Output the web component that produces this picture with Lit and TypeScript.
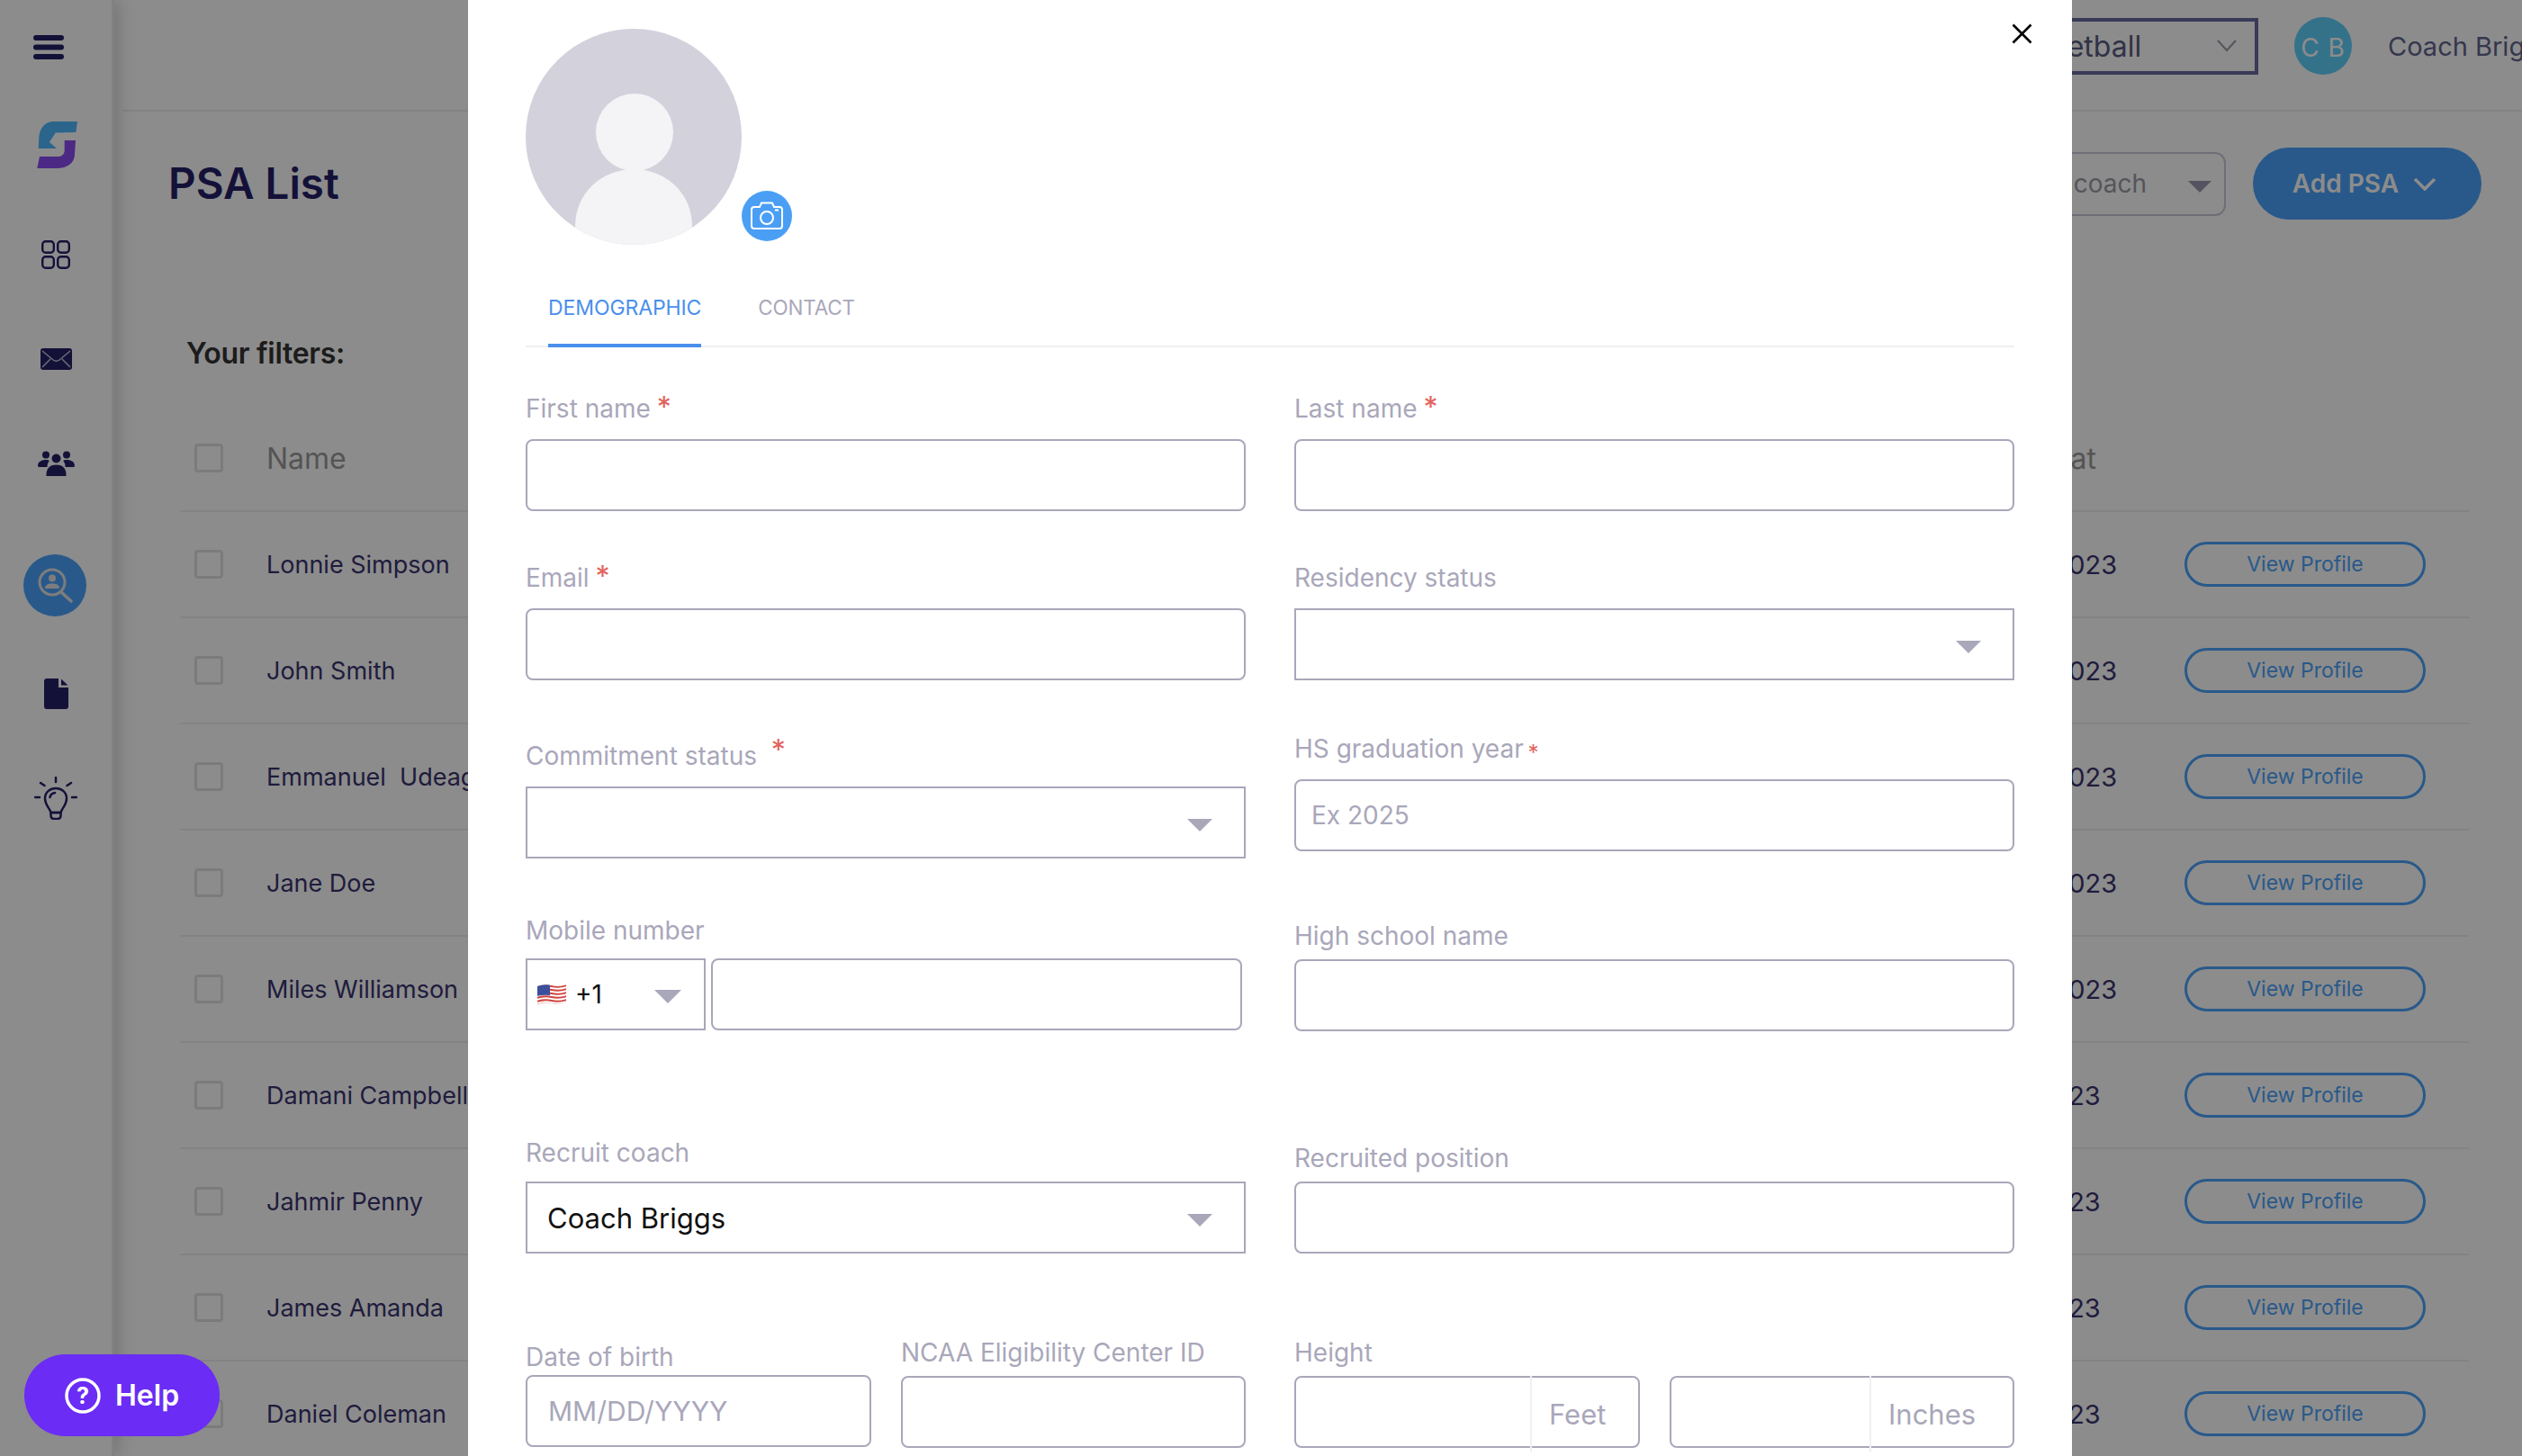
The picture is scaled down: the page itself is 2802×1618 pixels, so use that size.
import { LitElement, html, css, svg } from "lit";
import { customElement } from "lit/decorators.js";

const caret = html`<svg class="caret" viewBox="0 0 28 14"><path d="M0 0H28L14 14Z" fill="currentColor"/></svg>`;

const rows: [string, string][] = [
  ["Lonnie Simpson", "10/12/2023"],
  ["John Smith", "10/12/2023"],
  ["Emmanuel  Udeagha", "10/12/2023"],
  ["Jane Doe", "10/12/2023"],
  ["Miles Williamson", "10/12/2023"],
  ["Damani Campbell", "1/12/2023"],
  ["Jahmir Penny", "1/12/2023"],
  ["James Amanda", "1/12/2023"],
  ["Daniel Coleman", "1/12/2023"],
];

@customElement("app-root")
export class AppRoot extends LitElement {
  static styles = css`
    :host { display: block; position: relative; width: 2802px; height: 1618px; overflow: hidden; background: #fff;
      font-family: Inter, "Noto Sans", sans-serif; color: #262069; }
    * { box-sizing: border-box; }
    .page { display: flex; width: 100%; height: 100%; }
    .side { width: 127px; flex: none; border-right: 3px solid #ececec; box-shadow: 4px 0 18px rgba(0,0,0,.18); position: relative;
      display: grid; grid-template-rows: 104px 114px 130px 102px 130px 140px 102px 130px; justify-items: center; align-items: center; align-content: start; color: #262069; }
    .side svg { display: block; }
    .side .burger { margin-right: 16px; }
    .side .logo { margin-left: 3px; }
    .active { width: 70px; height: 69px; border-radius: 50%; background: #4ca3fb; display: flex; align-items: center; justify-content: center; margin-right: 3px; }
    .main { flex: 1; min-width: 0; overflow: hidden; }
    .top { height: 124px; margin-left: 9px; border-bottom: 2px solid #efefef; display: flex; align-items: center; padding: 0 0 20px 2064px; white-space: nowrap; }
    .sport { flex: none; width: 309px; height: 63px; border: 4px solid #686b9f; display: flex; align-items: center; justify-content: space-between; padding: 0 20px 0 20px; font-size: 32px; color: #5a5c80; }
    .sport svg { width: 22px; height: 14px; }
    .cb { flex: none; width: 64px; height: 64px; border-radius: 50%; margin-left: 40px; background: #5fcffb; color: #fff; display: flex; align-items: center; justify-content: center; font-size: 28px; letter-spacing: 1px; padding-top: 3px; }
    .coach { flex: none; margin-left: 40px; font-size: 29px; color: #62648e; }
    .head { display: flex; align-items: center; height: 160px; padding: 0 45px 0 60px; }
    .title { font-size: 47.5px; font-weight: 600; margin: 0 auto 2px 0; color: #262069; }
    .coachsel { width: 290px; height: 71px; border: 2px solid #c9c9d9; border-radius: 12px; display: flex; align-items: center; justify-content: flex-end; padding-right: 14px; gap: 46px; font-size: 28px; color: #9b9ba6; margin-right: 30px; }
    .coachsel .caret { color: #9b98ad; width: 26px; height: 13px; }
    .add { width: 254px; height: 80px; border-radius: 40px; background: #4ca3fb; color: #fff; font-size: 28px; font-weight: 600; display: flex; align-items: center; justify-content: center; gap: 16px; padding-right: 6px; }
    .add svg { width: 26px; height: 15px; }
    .filters { margin-left: 80px; height: 167px; padding-top: 86px; font-size: 32px; font-weight: 600; line-height: 46px; color: #333; letter-spacing: -.3px; }
    .table { margin-left: 73px; width: 2543px; }
    .row { display: grid; grid-template-columns: 32px 1947px 232px 268px; align-items: center; height: 118px; padding-left: 16px; border-bottom: 2px solid #eee; font-size: 27px; color: #3a3470; }
    .row.hd { font-size: 32px; color: #9a9a9a; }
    .row > :nth-child(2) { padding-left: 48px; white-space: pre; }
    .row > :nth-child(3) { white-space: nowrap; font-size: 29px; padding-left: 5px; }
    .row.hd > :nth-child(3) { font-size: 32px; padding-left: 0; margin-left: -3px; }
    .check { width: 32px; height: 32px; border: 3px solid #e0e0e0; border-radius: 4px; }
    .view { height: 50px; border: 3px solid #4ca3fb; border-radius: 25px; color: #4ca3fb; font-size: 23px; display: flex; align-items: center; justify-content: center; }

    .overlay { position: absolute; inset: 0; background: rgba(0,0,0,.45); }
    .modal { position: absolute; left: 520px; top: 0; width: 1782px; height: 1618px; background: #fff; overflow: hidden; padding: 0 64px; color: #111; }
    .close { position: absolute; left: 1715px; top: 26px; width: 23px; height: 23px; display: block; }
    .photo { display: flex; align-items: flex-end; padding-top: 32px; }
    .photo svg.av { width: 240px; height: 240px; display: block; }
    .cam { width: 56px; height: 56px; border-radius: 50%; background: #4a9ff5; display: flex; align-items: center; justify-content: center; margin-bottom: 4px; }
    .tabs { height: 114px; border-bottom: 2px solid #eff0f3; display: flex; align-items: flex-end; gap: 63px; padding-left: 25px; font-size: 23px; line-height: 28px; color: #a9a7ba; letter-spacing: -.1px; }
    .tab { padding-bottom: 28px; font-size: 22.4px; }
    .tab.on { color: #4a8fec; border-bottom: 4px solid #4a8fec; margin-bottom: -2px; padding-bottom: 26px; font-size: 23px; }
    .form { display: grid; grid-template-columns: 800px 800px; column-gap: 54px; }
    .col { display: flex; flex-direction: column; }
    label { display: block; font-size: 28px; line-height: 34px; color: #a9a7ba; margin-bottom: 17px; white-space: nowrap; }
    .req { color: #e2625c; margin-left: -1px; font-size: 32px; line-height: 0; }
    .ctl { height: 80px; border: 2px solid #a9a7ba; border-radius: 8px; display: flex; align-items: center; padding: 0 22px; font-size: 31px; color: #a9a7ba; }
    .ctl.sel { border-radius: 0; justify-content: space-between; color: #111; padding-right: 35px; }
    .caret { width: 28px; height: 14px; color: #a9a7ba; display: block; margin-top: 6px; flex: none; }
    .hold { font-size: 28px; }
    .ctl.hold { padding-left: 17px; }
    .f-first { margin-top: 51px; }
    .f-email { margin-top: 57px; }
    .f-commit { margin-top: 67px; }
    .f-commit .req { margin-left: 8px; position: relative; top: -5px; }
    .f-mobile { margin-top: 63px; } .f-mobile label { margin-bottom: 14px; }
    .f-coach { margin-top: 119px; } .f-coach label { margin-bottom: 15px; }
    .f-last { margin-top: 51px; }
    .f-res { margin-top: 57px; }
    .f-hs { margin-top: 59px; }
    .f-hs .req { font-size: 24px; position: relative; top: 3px; margin-left: -3px; }
    .f-hs-s { margin-top: 77px; } .f-hs-s label { margin-bottom: 9px; }
    .f-pos { margin-top: 124px; } .f-pos label { margin-bottom: 9px; }
    .pair { display: flex; }
    .bot { margin-top: 93px; justify-content: space-between; }
    .bot .half { width: 384px; }
    .bot .half.dob { margin-top: 5px; } .bot .dob label { margin-bottom: 3px; }
    .bot .dob .ctl { font-size: 30px; padding-left: 23px; }
    .bot .half.ncaa { width: 383px; } .bot .ncaa label { margin-bottom: 9px; }
    .phone { gap: 6px; }
    .cc { width: 200px; height: 80px; border: 2px solid #a9a7ba; display: flex; align-items: center; padding: 0 25px 0 10px; font-size: 28px; color: #111; }
    .cc svg.flag { width: 34px; height: 24px; margin-right: 9px; display: block; }
    .cc .caret { margin-left: auto; width: 30px; height: 15px; margin-top: 4px; }
    .tel { width: 590px; }
    .h-wrap { margin-top: 93px; }
    .h-wrap label { margin-bottom: 9px; }
    .units { display: flex; justify-content: space-between; }
    .unit { height: 80px; border: 2px solid #a9a7ba; border-radius: 8px; display: grid; align-items: center; font-size: 31px; color: #a9a7ba; }
    .unit.ft { width: 384px; grid-template-columns: 260px 1fr; }
    .unit.in { width: 383px; grid-template-columns: 220px 1fr; }
    .unit i { display: block; height: 76px; }
    .unit .u { height: 84px; margin: -2px 0; border-left: 2px solid #eef0f3; padding-left: 19px; display: flex; align-items: center; }

    .help { position: absolute; left: 27px; top: 1505px; width: 217px; height: 91px; border-radius: 46px; background: #6b2cf5; color: #fff; display: flex; align-items: center; gap: 16px; padding-left: 45px; font-size: 32px; font-weight: 600; }
    .help svg { width: 40px; height: 40px; display: block; }
  `;

  render() {
    const chev = html`<svg viewBox="0 0 26 15" fill="none" stroke="currentColor" stroke-width="3.5"><path d="M2 2L13 13L24 2"/></svg>`;
    return html`
      <div class="page">
        <aside class="side">
          <svg class="burger" width="34" height="27" viewBox="0 0 34 27"><g fill="#262069"><rect width="34" height="6" rx="3"/><rect y="10.5" width="34" height="6" rx="3"/><rect y="21" width="34" height="6" rx="3"/></g></svg>
          <svg class="logo" width="46" height="52" viewBox="0 0 46 52"><path d="M45 0L19 0C9 0 3 7 2.3 18L1.700 30L22 30L14 23L20.700 12.500L43.300 12Z" fill="#4fb8ff"/><path d="M43 21L30.700 21L30.700 32C30.700 36 28 39 24 39L3 39L.3 52L22 52C34 52 42 46 42 36Z" fill="#8a4bf0"/></svg>
          <svg width="32" height="32" viewBox="0 0 32 32" fill="none" stroke="#262069" stroke-width="2.4"><rect x="1.2" y="1.2" width="12.6" height="12.6" rx="3.5"/><rect x="18.2" y="1.2" width="12.6" height="12.6" rx="3.5"/><rect x="1.2" y="18.2" width="12.6" height="12.6" rx="3.5"/><rect x="18.2" y="18.2" width="12.6" height="12.6" rx="3.5"/></svg>
          <svg width="35" height="24" viewBox="0 0 35 24"><rect width="35" height="24" rx="3" fill="#262069"/><path d="M2 3L14 13Q17.500 15.500 21 13L33 3M2 21L11 12M33 21L24 12" fill="none" stroke="#fff" stroke-opacity=".75" stroke-width="1.500"/></svg>
          <svg width="41" height="28" viewBox="0 0 41 28" fill="#262069"><circle cx="9" cy="4.500" r="4"/><circle cx="32" cy="4.500" r="4"/><circle cx="20.500" cy="8.500" r="5"/><path d="M0 17C0 12 4 10 9 10C11 10 12 10.500 13 11C11 13 10.500 15 10.500 18L1 18Z"/><path d="M41 17C41 12 37 10 32 10C30 10 29 10.500 28 11C30 13 30.500 15 30.500 18L40 18Z"/><path d="M9.500 28C9 20 13 15.500 20.500 15.500C28 15.500 32 20 31.500 28Z"/></svg>
          <div class="active"><svg width="42" height="42" viewBox="0 0 42 42" fill="none" stroke="#e3e3e3" stroke-width="3"><circle cx="18" cy="18" r="14"/><path d="M28 29L39 39" stroke-linecap="round" stroke-width="3.500"/><circle cx="18" cy="13.500" r="4" fill="#e3e3e3" stroke="none"/><path d="M10 25C10 21 13 19.500 18 19.500C23 19.500 26 21 26 25Z" fill="#e3e3e3" stroke="none"/></svg></div>
          <svg width="27" height="34" viewBox="0 0 27 34"><path d="M3 0H16V10H27V31Q27 34 24 34H3Q0 34 0 31V3Q0 0 3 0ZM19 0.500L26.500 7.500H19Z" fill="#262069"/></svg>
          <svg width="48" height="48" viewBox="0 0 48 48" fill="none" stroke="#262069" stroke-width="2.500" stroke-linecap="round"><path d="M24 1V6M7 7L11.500 10M41 7L36.500 10M1 23H6M42 23H47"/><path d="M18.500 40C18 36 12 32 12 24C12 17 18 13 24 13C30 13 36 17 36 24C36 32 30 36 29.500 40Z"/><path d="M18.500 40H29.500V43Q29.500 47 26 47H22Q18.500 47 18.500 43ZM17.500 23C18 20 20 18.500 23 18"/></svg>
        </aside>
        <div class="main">
          <div class="top">
            <div class="sport"><span>Basketball</span><svg viewBox="0 0 22 14" fill="none" stroke="#9a9ba8" stroke-width="2"><path d="M1 1L11 12L21 1"/></svg></div>
            <div class="cb">C B</div>
            <div class="coach">Coach Briggs</div>
          </div>
          <div class="head">
            <h1 class="title">PSA List</h1>
            <div class="coachsel"><span>coach</span>${caret}</div>
            <div class="add"><span>Add PSA</span>${chev}</div>
          </div>
          <div class="filters">Your filters:</div>
          <div class="table">
            <div class="row hd"><div class="check"></div><div>Name</div><div>Added at</div><div></div></div>
            ${rows.map(([n, d]) => html`<div class="row"><div class="check"></div><div>${n}</div><div>${d}</div><div class="view">View Profile</div></div>`)}
          </div>
        </div>
      </div>
      <div class="overlay"></div>
      <div class="modal">
        <svg class="close" viewBox="0 0 23 23" fill="none" stroke="#000" stroke-width="2.600"><path d="M1.500 1.500L21.500 21.500M21.500 1.500L1.500 21.500"/></svg>
        <div class="photo">
          <svg class="av" viewBox="0 0 240 240"><defs><clipPath id="c"><circle cx="120" cy="120" r="120"/></clipPath></defs><g clip-path="url(#c)"><rect width="240" height="240" fill="#d3d1dc"/><circle cx="121" cy="115" r="43" fill="#f4f4f6"/><path d="M55 240V220C55 182 85 156 120 156C155 156 185 182 185 220V240Z" fill="#f4f4f6"/></g></svg>
          <div class="cam"><svg width="36" height="32" viewBox="0 0 36 32" fill="none" stroke="#fff" stroke-width="2"><path d="M4 6H10L12 1.500H24L26 6H32Q35 6 35 9V27Q35 30 32 30H4Q1 30 1 27V9Q1 6 4 6Z"/><circle cx="18" cy="18" r="7"/><path d="M27 9.500H31"/></svg></div>
        </div>
        <div class="tabs"><div class="tab on">DEMOGRAPHIC</div><div class="tab">CONTACT</div></div>
        <div class="form">
          <div class="col">
            <div class="f-first"><label>First name <span class="req">*</span></label><div class="ctl"></div></div>
            <div class="f-email"><label>Email <span class="req">*</span></label><div class="ctl"></div></div>
            <div class="f-commit"><label>Commitment status <span class="req">*</span></label><div class="ctl sel"><span></span>${caret}</div></div>
            <div class="f-mobile"><label>Mobile number</label>
              <div class="pair phone"><div class="cc"><svg class="flag" viewBox="0 0 34 24">${svg`<defs><clipPath id="fl"><path d="M1 3Q9 0 17 2T33 1V21Q25 24 17 22T1 23Z"/></clipPath></defs><g clip-path="url(#fl)"><rect width="34" height="24" fill="#fff"/><g fill="none" stroke="#d0453f" stroke-width="1.900"><path d="M0 4Q9 1 17 3T34 2M0 8Q9 5 17 7T34 6M0 12Q9 9 17 11T34 10M0 16Q9 13 17 15T34 14M0 20Q9 17 17 19T34 18M0 24Q9 21 17 23T34 22"/></g><path d="M0 0H15V13Q8 12 0 14Z" fill="#3d4f9c"/></g>`}</svg><span>+1</span>${caret}</div><div class="ctl tel"></div></div>
            </div>
            <div class="f-coach"><label>Recruit coach</label><div class="ctl sel"><span>Coach Briggs</span>${caret}</div></div>
            <div class="pair bot">
              <div class="half dob"><label>Date of birth</label><div class="ctl">MM/DD/YYYY</div></div>
              <div class="half ncaa"><label>NCAA Eligibility Center ID</label><div class="ctl"></div></div>
            </div>
          </div>
          <div class="col">
            <div class="f-last"><label>Last name <span class="req">*</span></label><div class="ctl"></div></div>
            <div class="f-res"><label>Residency status</label><div class="ctl sel"><span></span>${caret}</div></div>
            <div class="f-hs"><label>HS graduation year <span class="req">*</span></label><div class="ctl hold">Ex 2025</div></div>
            <div class="f-hs-s"><label>High school name</label><div class="ctl"></div></div>
            <div class="f-pos"><label>Recruited position</label><div class="ctl"></div></div>
            <div class="h-wrap"><label>Height</label>
              <div class="units">
                <div class="unit ft"><i></i><div class="u">Feet</div></div>
                <div class="unit in"><i></i><div class="u">Inches</div></div>
              </div>
            </div>
          </div>
        </div>
      </div>
      <div class="help">
        <svg viewBox="0 0 40 40" fill="none"><circle cx="20" cy="20" r="18" stroke="#fff" stroke-width="3.500"/><text x="20" y="29" text-anchor="middle" font-size="25" font-weight="700" fill="#fff" font-family="Inter, sans-serif">?</text></svg>
        <span>Help</span>
      </div>
    `;
  }
}
